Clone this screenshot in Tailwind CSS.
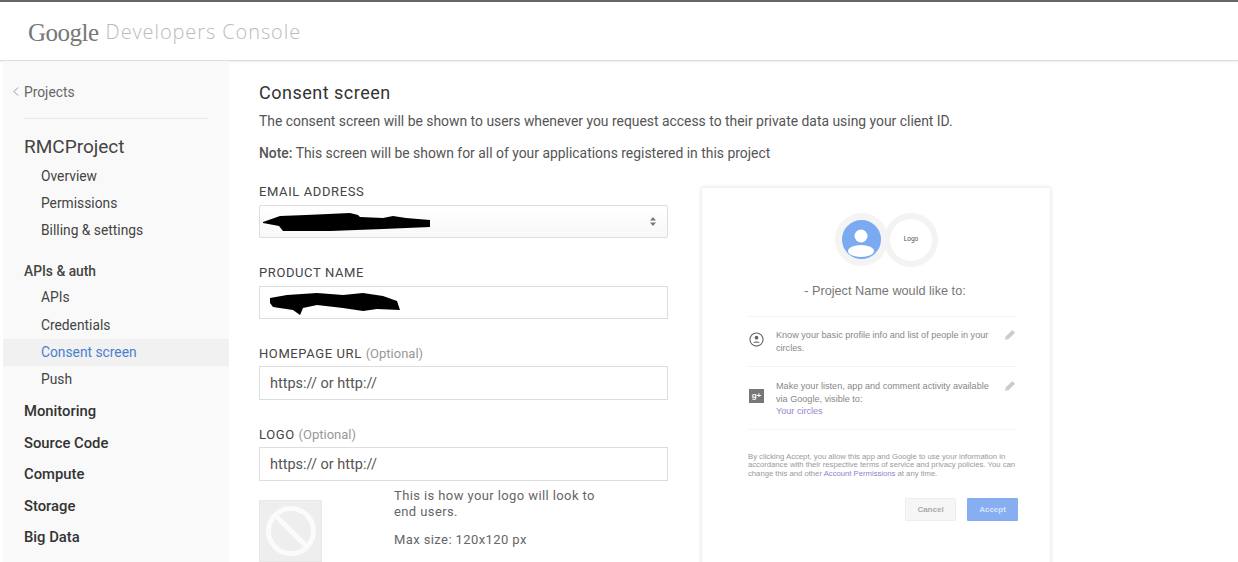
<!DOCTYPE html>
<html lang="en">
<head>
  <meta charset="UTF-8" />
  <title>Google Developers Console</title>
  <script src="https://cdn.jsdelivr.net/npm/@tailwindcss/browser@4"></script>
</head>
<body class="bg-white font-['Roboto',sans-serif] text-[#444] h-[562px] overflow-hidden">
  <!-- top bar -->
  <header class="h-[61px] border-t-2 border-b border-t-[#666] border-b-[#ddd] shadow-[0_1px_2px_rgba(0,0,0,0.08)] flex items-center pl-[28px] pt-[2px]">
    <span class="font-['Liberation_Serif',serif] text-[25px] tracking-[-0.5px] text-[#777] leading-none">Google</span>
    <span class="ml-[7px] font-['Open_Sans',sans-serif] font-light text-[20px] tracking-[0.9px] text-[#bbb] leading-none">Developers Console</span>
  </header>

  <div class="flex h-[501px]">
    <!-- sidebar -->
    <aside class="ml-[3px] w-[226px] shrink-0 bg-[#f9f9f9] text-[13.8px] text-[#444]">
      <div class="h-[57px] pt-[22px] pl-[10px] flex items-start text-[#666] leading-[18px]">
        <svg class="w-[6px] h-[9px] mt-[4px] mr-[5px]" viewBox="0 0 6 9" fill="none" stroke="#999" stroke-width="1"><path d="M5 .5 1 4.500l4 4"/></svg>
        <span>Projects</span>
      </div>
      <div class="ml-[21px] w-[184px] border-t border-[#eaeaea]"></div>
      <div class="pl-[21px] pt-[16px] text-[19px] leading-[24px] text-[#444]">RMCProject</div>
      <ul class="pl-[38px] pt-[4px]">
        <li class="h-[27px] leading-[27px]">Overview</li>
        <li class="h-[27px] leading-[27px]">Permissions</li>
        <li class="h-[27px] leading-[27px]">Billing &amp; settings</li>
      </ul>
      <div class="pl-[21px] pt-[14px] h-[40px] leading-[27px] font-medium">APIs &amp; auth</div>
      <ul>
        <li class="pl-[38px] h-[27px] leading-[27px]">APIs</li>
        <li class="pl-[38px] h-[27px] leading-[27px] mt-[1px]">Credentials</li>
        <li class="pl-[38px] h-[27px] leading-[27px] bg-[#f1f1f1] text-[#4a7fd0]">Consent screen</li>
        <li class="pl-[38px] h-[27px] leading-[27px]">Push</li>
      </ul>
      <ul class="pl-[21px] pt-[3px] font-medium text-[#333] text-[14.8px]">
        <li class="h-[31.5px] leading-[31.5px]">Monitoring</li>
        <li class="h-[31.5px] leading-[31.5px]">Source Code</li>
        <li class="h-[31.5px] leading-[31.5px]">Compute</li>
        <li class="h-[31.5px] leading-[31.5px]">Storage</li>
        <li class="h-[31.5px] leading-[31.5px]">Big Data</li>
      </ul>
    </aside>

    <!-- main -->
    <main class="pl-[30px] flex-1 min-w-0 overflow-hidden">
      <h1 class="text-[18px] leading-[24px] pt-[20px] text-[#333] tracking-[0.5px]">Consent screen</h1>
      <p class="text-[13.9px] leading-[20px] mt-[6px] text-[#555]">The consent screen will be shown to users whenever you request access to their private data using your client ID.</p>
      <p class="text-[13.9px] leading-[20px] mt-[12px] text-[#555]"><b class="font-medium">Note:</b> This screen will be shown for all of your applications registered in this project</p>

      <div class="flex">
        <!-- form -->
        <form class="w-[409px] shrink-0 pt-[21px]">
          <label class="block text-[13px] leading-[16px] tracking-[0.6px] text-[#444]">EMAIL ADDRESS</label>
          <div class="mt-[5px] h-[33px] border border-[#ddd] rounded-[2px] bg-linear-to-b from-white to-[#f8f8f8] relative flex items-center justify-end pr-[11px]">
            <svg class="absolute left-[3px] top-[7px] w-[168px] h-[19px]" viewBox="0 0 168 19" fill="#000"><path d="M0 9 17 3 43 2 87 0 95 2 97 4 120 5 130 3 143 5 167 7 167 14 120 16 67 18 20 18 16 13 0 10z"/></svg>
            <svg class="w-[6px] h-[9px]" viewBox="0 0 6 9" fill="#777"><path d="M3 0 6 3.500H0zM0 5.500h6L3 9z"/></svg>
          </div>
          <label class="block mt-[27px] text-[13px] leading-[16px] tracking-[0.6px] text-[#444]">PRODUCT NAME</label>
          <div class="mt-[5px] h-[33px] border border-[#ddd] relative">
            <svg class="absolute left-[10px] top-[6px] w-[130px] h-[22px]" viewBox="0 0 130 22" fill="#000"><path d="M0 5 17 2 47 0 73 2 93 0 113 3 127 8 130 17 107 16 93 18 73 15 47 12 33 15 30 22 23 17 3 14 0 10z"/></svg>
          </div>
          <label class="block mt-[27px] text-[13px] leading-[16px] tracking-[0.6px] text-[#444]">HOMEPAGE URL <span class="text-[#999] tracking-normal">(Optional)</span></label>
          <div class="mt-[4px] h-[34px] border border-[#ddd] pl-[10px] text-[14.5px] leading-[33px] text-[#555]">https:// or http://</div>
          <label class="block mt-[27px] text-[13px] leading-[16px] tracking-[0.6px] text-[#444]">LOGO <span class="text-[#999] tracking-normal">(Optional)</span></label>
          <div class="mt-[4px] h-[34px] border border-[#ddd] pl-[10px] text-[14.5px] leading-[33px] text-[#555]">https:// or http://</div>
          <div class="flex mt-[7px]">
            <div class="mt-[12px] w-[63px] h-[62px] bg-[#eee] border border-[#e8e8e8] flex items-center justify-center shrink-0">
              <svg class="w-[52px] h-[52px]" viewBox="0 0 52 52" fill="none" stroke="#fbfbfb" stroke-width="5"><circle cx="26" cy="26" r="22.500"/><path d="M10 10l32 32"/></svg>
            </div>
            <div class="ml-[72px] text-[13px] leading-[16px] text-[#666] tracking-[0.4px] w-[220px]">
              <p>This is how your logo will look to end users.</p>
              <p class="mt-[12px]">Max size: 120x120 px</p>
            </div>
          </div>
        </form>

        <!-- preview card -->
        <section class="ml-[34px] mt-[24px] w-[348px] h-[400px] shrink-0 bg-white border-t border-[#f2f2f2] shadow-[0_1px_5px_rgba(0,0,0,0.14)] text-[#777]">
          <div class="flex pt-[25px] pl-[133px]">
            <div class="w-[39px] h-[39px] rounded-full border-[7.5px] border-[#f4f4f4] bg-[#7baaf0] box-content overflow-hidden -mr-[4px]">
              <svg class="w-[39px] h-[39px]" viewBox="0 0 39 39" fill="#fff"><circle cx="19" cy="16" r="6.500"/><ellipse cx="19" cy="31" rx="13" ry="6"/></svg>
            </div>
            <div class="w-[42px] h-[42px] rounded-full border-[6px] border-[#f3f3f3] bg-white flex items-center justify-center box-content text-[6.5px] text-[#555] relative">Logo</div>
          </div>
          <p class="mt-[16px] text-center font-['Liberation_Sans',sans-serif] text-[12.7px] leading-[16px] text-[#777] pl-[18px]">- Project Name would like to:</p>
          <div class="ml-[46px] mr-[34px] mt-[17px] font-['Liberation_Sans',sans-serif] text-[9.1px] leading-[12.500px] text-[#888]">
            <div class="border-t border-[#f4f4f4] flex pt-[12px] h-[50px]">
              <svg class="w-[15px] h-[15px] mt-[3px] shrink-0 ml-[1px]" viewBox="0 0 16 16" fill="none" stroke="#666" stroke-width="1.200"><circle cx="8" cy="8" r="7"/><circle cx="8" cy="6" r="2" fill="#666" stroke="none"/><path d="M4.500 11.500c1-2 6-2 7 0z" fill="#666" stroke="none"/></svg>
              <p class="ml-[12px] w-[224px]">Know your basic profile info and list of people in your circles.</p>
              <svg class="w-[11px] h-[11px] ml-[6px] shrink-0" viewBox="0 0 12 12" fill="#ccc"><path d="M0 12l1-4 7-7 3 3-7 7z"/></svg>
            </div>
            <div class="border-t border-[#f4f4f4] flex pt-[13px] h-[63px]">
              <div class="w-[15px] h-[14px] mt-[9px] ml-[1px] bg-[#777] text-white text-[8px] leading-[14px] text-center shrink-0 font-bold">g+</div>
              <p class="ml-[12px] w-[224px]">Make your listen, app and comment activity available via Google, visible to:<br><span class="text-[#9b82cf]">Your circles</span></p>
              <svg class="w-[11px] h-[11px] ml-[6px] shrink-0" viewBox="0 0 12 12" fill="#ccc"><path d="M0 12l1-4 7-7 3 3-7 7z"/></svg>
            </div>
            <div class="border-t border-[#f6f6f6]"></div>
          </div>
          <p class="ml-[46px] mr-[30px] mt-[23px] font-['Liberation_Sans',sans-serif] text-[7.7px] leading-[8.300px] text-[#999]">By clicking Accept, you allow this app and Google to use your information in accordance with their respective terms of service and privacy policies. You can change this and other <span class="text-[#8d7fd0]">Account Permissions</span> at any time.</p>
          <div class="flex justify-end mr-[32px] mt-[20px] gap-[11px] font-['Liberation_Sans',sans-serif] text-[8px] font-bold">
            <div class="w-[51px] h-[23px] bg-[#f6f6f6] border border-[#eee] rounded-[1px] text-center leading-[21px] text-[#aaa]">Cancel</div>
            <div class="w-[51px] h-[23px] bg-[#86aef0] rounded-[1px] text-center leading-[23px] text-[#d8e4fa]">Accept</div>
          </div>
        </section>
      </div>
    </main>
  </div>
</body>
</html>
